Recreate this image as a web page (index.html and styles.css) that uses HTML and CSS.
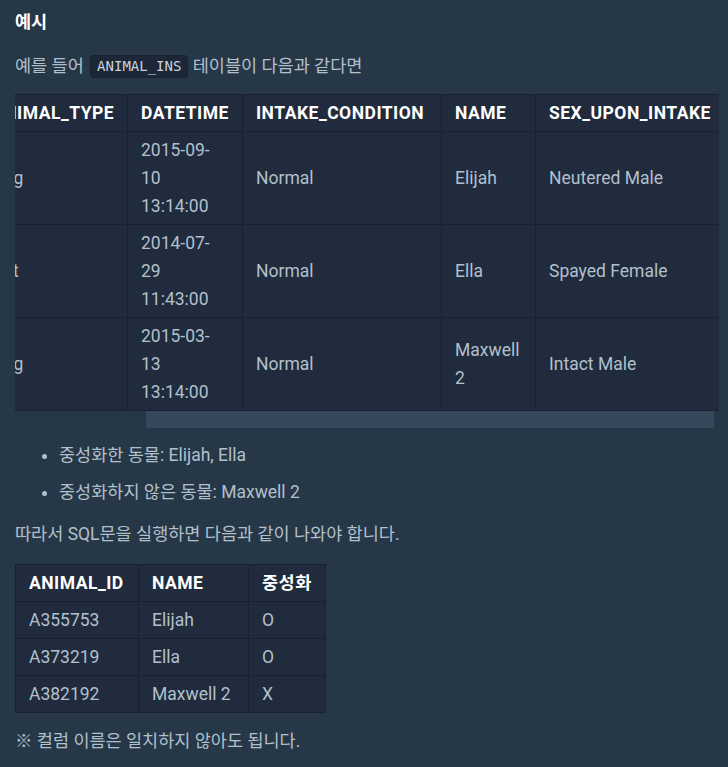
FILE: index.html
```html
<!DOCTYPE html>
<html lang="ko">
<head>
<meta charset="utf-8">
<title>예시</title>
<link rel="stylesheet" href="styles.css">
</head>
<body>
<div class="content">
  <h5 class="title">예시</h5>
  <p class="para">예를 들어 <code class="chip">ANIMAL_INS</code> 테이블이 다음과 같다면</p>

  <div class="scroll-box">
    <div class="scroll-view">
      <table class="grid wide">
        <colgroup>
          <col class="c-id"><col class="c-type"><col class="c-date"><col class="c-cond"><col class="c-name"><col class="c-sex">
        </colgroup>
        <thead>
          <tr><th>ANIMAL_ID</th><th>ANIMAL_TYPE</th><th>DATETIME</th><th>INTAKE_CONDITION</th><th>NAME</th><th>SEX_UPON_INTAKE</th></tr>
        </thead>
        <tbody>
          <tr><td>A355753</td><td>Dog</td><td>2015-09-<br>10<br>13:14:00</td><td>Normal</td><td>Elijah</td><td>Neutered Male</td></tr>
          <tr><td>A373219</td><td>Cat</td><td>2014-07-<br>29<br>11:43:00</td><td>Normal</td><td>Ella</td><td>Spayed Female</td></tr>
          <tr><td>A382192</td><td>Dog</td><td>2015-03-<br>13<br>13:14:00</td><td>Normal</td><td>Maxwell<br>2</td><td>Intact Male</td></tr>
        </tbody>
      </table>
    </div>
    <div class="scroll-track"><div class="scroll-thumb"></div></div>
  </div>

  <ul class="list">
    <li>중성화한 동물: Elijah, Ella</li>
    <li>중성화하지 않은 동물: Maxwell 2</li>
  </ul>

  <p class="para gap16">따라서 SQL문을 실행하면 다음과 같이 나와야 합니다.</p>

  <table class="grid small">
    <colgroup><col class="s-id"><col class="s-name"><col class="s-flag"></colgroup>
    <thead><tr><th>ANIMAL_ID</th><th>NAME</th><th>중성화</th></tr></thead>
    <tbody>
      <tr><td>A355753</td><td>Elijah</td><td>O</td></tr>
      <tr><td>A373219</td><td>Ella</td><td>O</td></tr>
      <tr><td>A382192</td><td>Maxwell 2</td><td>X</td></tr>
    </tbody>
  </table>

  <p class="para note">※ 컬럼 이름은 일치하지 않아도 됩니다.</p>
</div>
</body>
</html>
```

FILE: styles.css
```css
html, body {
  margin: 0;
  padding: 0;
  background: #263747;
}

body {
  font-family: Roboto, "Noto Sans CJK KR", sans-serif;
  font-size: 17.5px;
  line-height: 28px;
  color: #b2c0cc;
}

.content {
  padding: 8px 9px 0 15px;
}

.title {
  margin: 0 0 16px;
  font-size: 17.5px;
  font-weight: 700;
  line-height: 28px;
  color: #ffffff;
}

.para {
  margin: 0 0 14px;
}

.gap16 {
  margin-bottom: 16px;
}

.chip {
  display: inline-block;
  font-family: "DejaVu Sans Mono", monospace;
  font-size: 14px;
  line-height: 21px;
  padding: 0 6px;
  margin-left: 2px;
  border: 1px solid #172130;
  border-radius: 4px;
  background: #1c2738;
  color: #c9d3de;
  vertical-align: 1px;
}

.scroll-box {
  width: 704px;
  margin-bottom: 13px;
}

.scroll-view {
  overflow: hidden;
}

.grid {
  border-collapse: collapse;
  background: #202b3d;
  table-layout: fixed;
}

.grid th,
.grid td {
  border: 1px solid #172130;
  padding: 4px 13px;
  text-align: left;
  vertical-align: middle;
  line-height: 28px;
}

.grid th {
  color: #ffffff;
  font-weight: 700;
  letter-spacing: 0.5px;
}

.wide {
  width: 881px;
  margin-left: -177px;
}

.c-id { width: 140px; }
.c-type { width: 149px; }
.c-date { width: 115px; }
.c-cond { width: 199px; }
.c-name { width: 94px; }
.c-sex { width: 184px; }

.scroll-track {
  height: 17px;
  padding-right: 5px;
}

.scroll-thumb {
  height: 17px;
  margin-left: 131px;
  background: #37475c;
}

.list {
  margin: 0 0 14px;
  padding-left: 44px;
}

.list li + li {
  margin-top: 9px;
}

.small {
  width: 310px;
  margin-bottom: 14px;
}

.s-id { width: 123px; }
.s-name { width: 110px; }
.s-flag { width: 77px; }

.note {
  margin: 0;
}
```
